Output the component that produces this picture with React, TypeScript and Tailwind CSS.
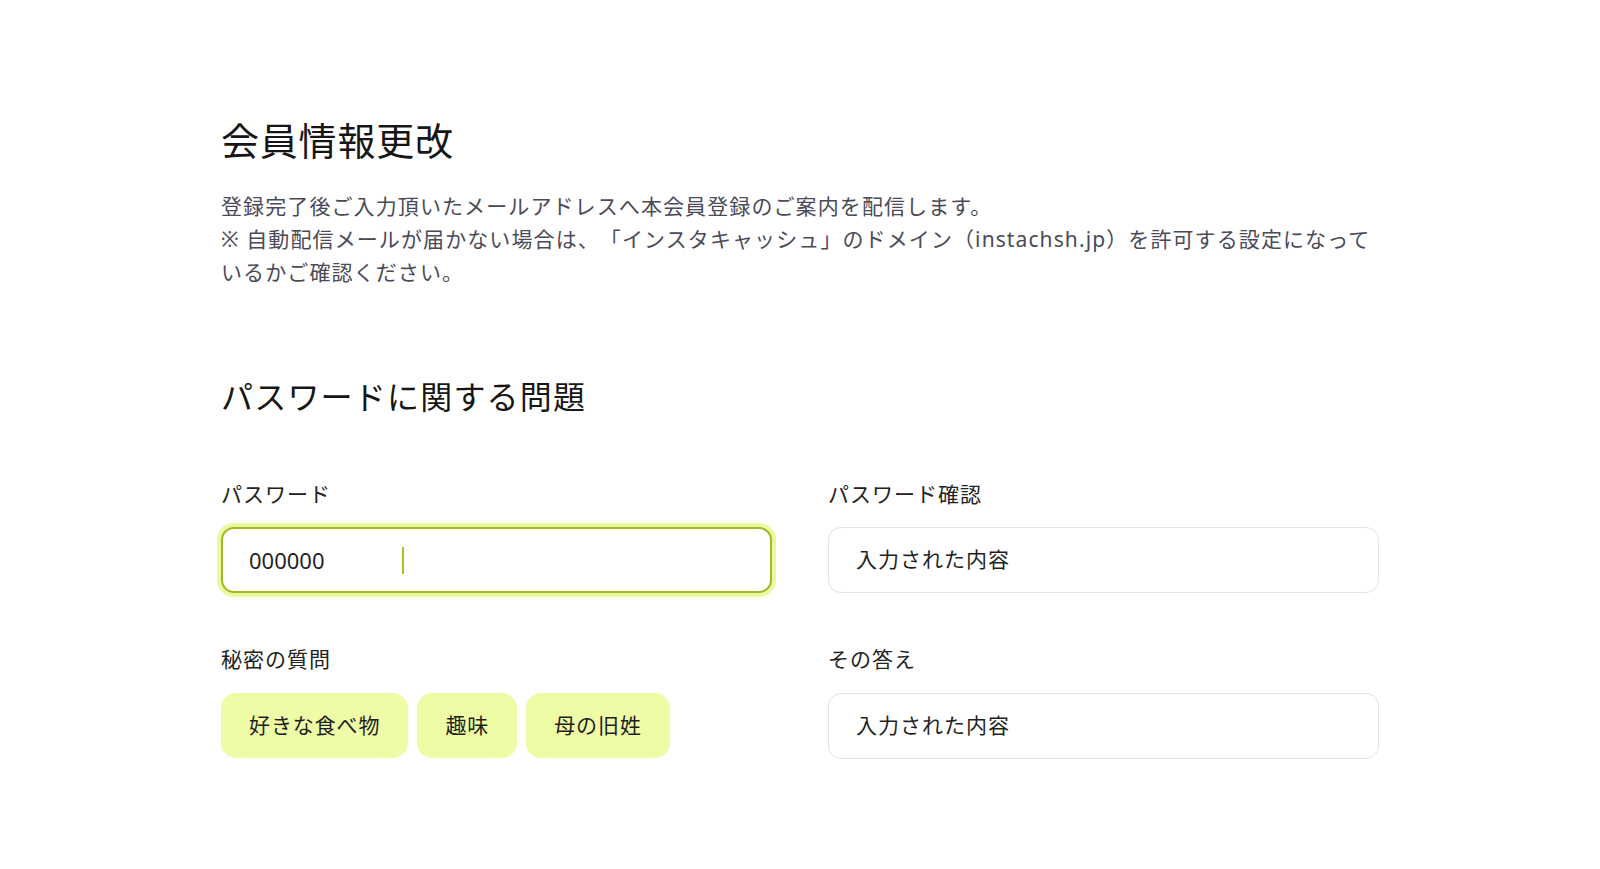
const jp = 'font-["Noto_Sans","Noto_Sans_CJK_JP",sans-serif]';

const questions = ['好きな食べ物', '趣味', '母の旧姓'];

function Label({ children }: { children: React.ReactNode }) {
  return <p className="text-[21px] leading-[30px] tracking-[1px] text-[#222]">{children}</p>;
}

function TextBox({ value }: { value: string }) {
  return (
    <div className="flex h-[66px] items-center rounded-[13px] border border-[#e3e3e3] bg-white px-[27px] text-[21px] tracking-[1px] text-[#1f1f1f]">
      {value}
    </div>
  );
}

export default function App() {
  return (
    <div className={`min-h-screen bg-white ${jp}`}>
      <div className="mx-auto w-[1158px] pt-[117px] pb-[110px]">
        <h1 className="text-[38px] leading-[46px] tracking-[0.8px] text-[#161616]">会員情報更改</h1>
        <p className="mt-[27px] text-[21px] leading-[33px] tracking-[1.1px] text-[#4a4a58] [text-spacing-trim:space-all]">
          登録完了後ご入力頂いたメールアドレスへ本会員登録のご案内を配信します。
          <br />
          ※ 自動配信メールが届かない場合は、「インスタキャッシュ」のドメイン（instachsh.jp）を許可する設定になっているかご確認ください。
        </p>

        <h2 className="mt-[88px] text-[32px] leading-[40px] tracking-[1.2px] text-[#161616]">パスワードに関する問題</h2>

        <div className="mt-[62px] grid grid-cols-2 gap-x-[56px] gap-y-[51px]">
          <div className="flex flex-col gap-[18px]">
            <Label>パスワード</Label>
            <div className="flex h-[66px] items-center rounded-[13px] border-2 border-[#a3b62c] bg-white px-[26px] text-[22px] text-[#1f1f1f] shadow-[0_0_0_4px_#e9f99c]">
              <span>000000</span>
              <span className="ml-[77px] inline-block h-[27px] w-[2px] bg-[#a6c21e]" />
            </div>
          </div>
          <div className="flex flex-col gap-[18px]">
            <Label>パスワード確認</Label>
            <TextBox value="入力された内容" />
          </div>
          <div className="flex flex-col gap-[19px]">
            <Label>秘密の質問</Label>
            <div className="flex gap-[9px]">
              {questions.map((q) => (
                <button
                  key={q}
                  className="h-[65px] rounded-[15px] bg-[#eefca6] px-[28px] text-[21px] tracking-[0.9px] text-[#1f1f1f]"
                >
                  {q}
                </button>
              ))}
            </div>
          </div>
          <div className="flex flex-col gap-[19px]">
            <Label>その答え</Label>
            <TextBox value="入力された内容" />
          </div>
        </div>
      </div>
    </div>
  );
}
